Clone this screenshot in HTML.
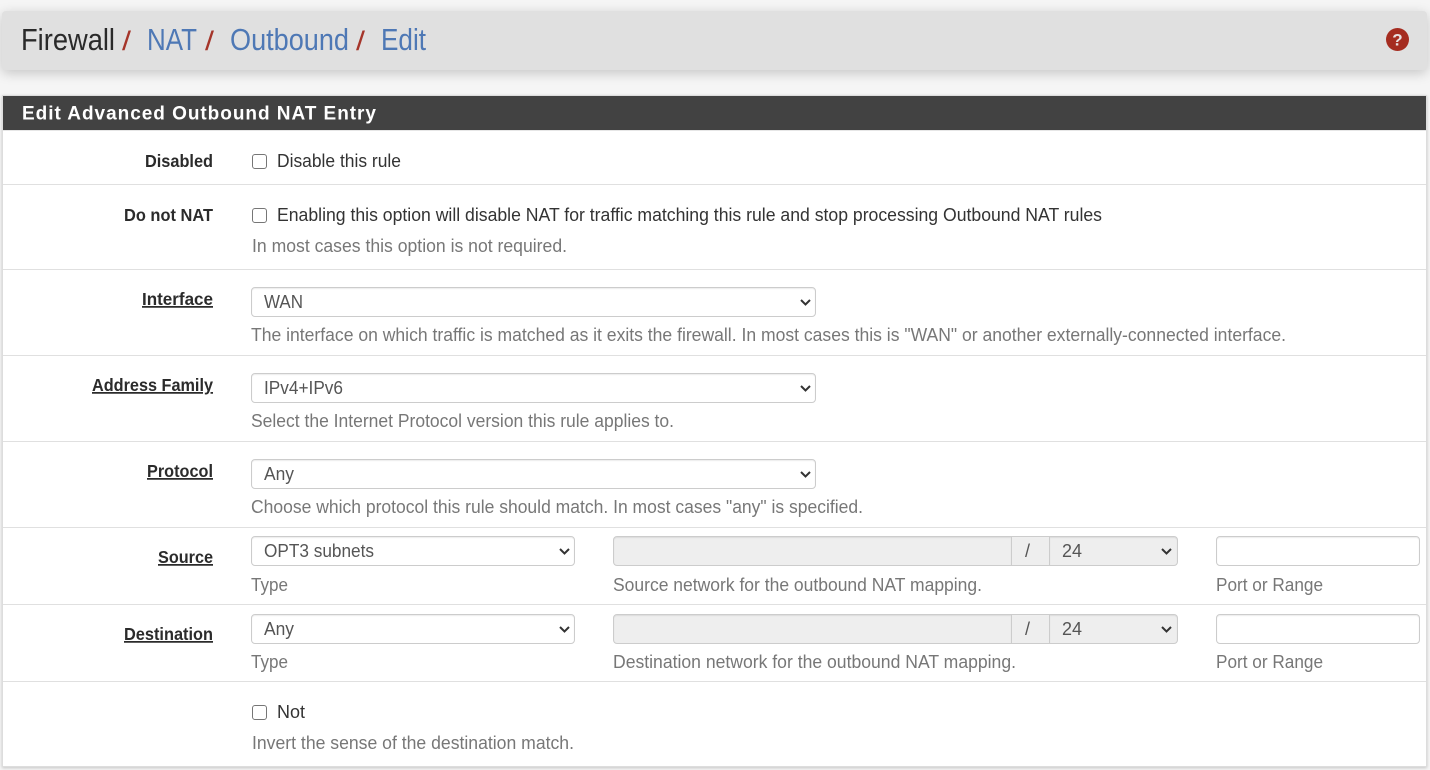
<!DOCTYPE html>
<html><head><meta charset="utf-8"><title>Firewall / NAT / Outbound / Edit</title>
<style>
html,body{margin:0;padding:0;width:1430px;height:770px;overflow:hidden;background:#f5f5f5;font-family:"Liberation Sans",sans-serif}
.a{position:absolute;box-sizing:border-box}
.hdr{left:2px;top:11px;width:1425px;height:59px;background:#e0e0e0;border-radius:4px;box-shadow:0 3px 12px rgba(0,0,0,.2)}
.panel{left:2px;top:95px;width:1425px;height:672px;background:#fff;border:1px solid #ddd;box-shadow:0 1px 3px rgba(0,0,0,.2)}
.ph{left:3px;top:96px;width:1423px;height:34px;background:#424242}
.l{left:3px;width:1423px;height:1px;background:#e0e0e0}
.f{height:30px;background:#fff;border:1px solid #ccc;border-radius:4px;box-shadow:inset 0 1px 1px rgba(0,0,0,.075)}
.d{background:#eee;box-shadow:inset 0 1px 1px rgba(0,0,0,.075)}
.c{width:15px;height:15px;border:1px solid #767676;border-radius:3px;background:#fff}
svg.o{position:absolute;left:0;top:0}
text{font-family:"Liberation Sans",sans-serif;font-size:18px}
.h{font-size:31px}
.s{font-size:27px}
.k{fill:#2a2a2a}.b{fill:#4e78b5}.r{fill:#a5352a}
.lab{font-weight:700;fill:#2b2b2b;font-size:17.5px}
.t{fill:#333}.g{fill:#777}.v{fill:#555}
.ch{fill:none;stroke:#333;stroke-width:2}
</style></head><body>
<div class="a hdr"></div>
<div class="a panel"></div>
<div class="a ph"></div>
<div class="a l" style="top:130px;background:#e6e6e6"></div>
<div class="a l" style="top:184px"></div>
<div class="a l" style="top:269px"></div>
<div class="a l" style="top:355px"></div>
<div class="a l" style="top:441px"></div>
<div class="a l" style="top:527px"></div>
<div class="a l" style="top:604px"></div>
<div class="a l" style="top:681px"></div>

<div class="a c" style="left:252px;top:154px"></div>
<div class="a c" style="left:252px;top:208px"></div>
<div class="a c" style="left:252px;top:705px"></div>

<div class="a f" style="left:251px;top:287px;width:565px"></div>
<div class="a f" style="left:251px;top:373px;width:565px"></div>
<div class="a f" style="left:251px;top:459px;width:565px"></div>
<div class="a f" style="left:251px;top:536px;width:324px"></div>
<div class="a f" style="left:251px;top:614px;width:324px"></div>

<div class="a f d" style="left:613px;top:536px;width:399px;border-radius:4px 0 0 4px"></div>
<div class="a f d" style="left:1011px;top:536px;width:39px;border-radius:0;box-shadow:none"></div>
<div class="a f d" style="left:1049px;top:536px;width:129px;border-radius:0 4px 4px 0"></div>
<div class="a f d" style="left:613px;top:614px;width:399px;border-radius:4px 0 0 4px"></div>
<div class="a f d" style="left:1011px;top:614px;width:39px;border-radius:0;box-shadow:none"></div>
<div class="a f d" style="left:1049px;top:614px;width:129px;border-radius:0 4px 4px 0"></div>
<div class="a f" style="left:1216px;top:536px;width:204px"></div>
<div class="a f" style="left:1216px;top:614px;width:204px"></div>

<svg class="o" width="1430" height="770" viewBox="0 0 1430 770">
<text class="h k" x="21" y="50" textLength="94" lengthAdjust="spacingAndGlyphs">Firewall</text>
<text class="s r" x="122" y="50" textLength="9" lengthAdjust="spacingAndGlyphs">/</text>
<text class="h b" x="147" y="50" textLength="50" lengthAdjust="spacingAndGlyphs">NAT</text>
<text class="s r" x="205" y="50" textLength="9" lengthAdjust="spacingAndGlyphs">/</text>
<text class="h b" x="230" y="50" textLength="119" lengthAdjust="spacingAndGlyphs">Outbound</text>
<text class="s r" x="356" y="50" textLength="9" lengthAdjust="spacingAndGlyphs">/</text>
<text class="h b" x="381" y="50" textLength="45" lengthAdjust="spacingAndGlyphs">Edit</text>

<circle cx="1397.500" cy="39.500" r="11.500" fill="#a52c20"/>
<text x="1397.500" y="45.500" text-anchor="middle" style="font-size:17px;font-weight:700;fill:#e8e0e0">?</text>

<text x="22" y="119.500" textLength="354" lengthAdjust="spacing" style="font-size:19px;font-weight:700;fill:#fff">Edit Advanced Outbound NAT Entry</text>

<text class="lab" x="145" y="167" textLength="68" lengthAdjust="spacingAndGlyphs">Disabled</text>
<text class="lab" x="124" y="221" textLength="89" lengthAdjust="spacingAndGlyphs">Do not NAT</text>
<text class="lab" x="142" y="305" textLength="71" lengthAdjust="spacingAndGlyphs" text-decoration="underline">Interface</text>
<text class="lab" x="92" y="391" textLength="121" lengthAdjust="spacingAndGlyphs" text-decoration="underline">Address Family</text>
<text class="lab" x="147" y="477" textLength="66" lengthAdjust="spacingAndGlyphs" text-decoration="underline">Protocol</text>
<text class="lab" x="158" y="563" textLength="55" lengthAdjust="spacingAndGlyphs" text-decoration="underline">Source</text>
<text class="lab" x="124" y="640" textLength="89" lengthAdjust="spacingAndGlyphs" text-decoration="underline">Destination</text>

<text class="t" x="277" y="167" textLength="124" lengthAdjust="spacingAndGlyphs">Disable this rule</text>
<text class="t" x="277" y="221" textLength="825" lengthAdjust="spacingAndGlyphs">Enabling this option will disable NAT for traffic matching this rule and stop processing Outbound NAT rules</text>
<text class="g" x="252" y="252" textLength="315" lengthAdjust="spacingAndGlyphs">In most cases this option is not required.</text>
<text class="v" x="264" y="308" textLength="39" lengthAdjust="spacingAndGlyphs">WAN</text>
<text class="g" x="251" y="341" textLength="1035" lengthAdjust="spacingAndGlyphs">The interface on which traffic is matched as it exits the firewall. In most cases this is "WAN" or another externally-connected interface.</text>
<text class="v" x="264" y="394" textLength="79" lengthAdjust="spacingAndGlyphs">IPv4+IPv6</text>
<text class="g" x="251" y="427" textLength="423" lengthAdjust="spacingAndGlyphs">Select the Internet Protocol version this rule applies to.</text>
<text class="v" x="264" y="480" textLength="30" lengthAdjust="spacingAndGlyphs">Any</text>
<text class="g" x="251" y="513" textLength="612" lengthAdjust="spacingAndGlyphs">Choose which protocol this rule should match. In most cases "any" is specified.</text>

<text class="v" x="264" y="557" textLength="110" lengthAdjust="spacingAndGlyphs">OPT3 subnets</text>
<text class="g" x="251" y="591" textLength="37" lengthAdjust="spacingAndGlyphs">Type</text>
<text class="v" x="1025" y="557">/</text>
<text class="v" x="1062" y="557" textLength="20" lengthAdjust="spacingAndGlyphs">24</text>
<text class="g" x="613" y="591" textLength="369" lengthAdjust="spacingAndGlyphs">Source network for the outbound NAT mapping.</text>
<text class="g" x="1216" y="591" textLength="107" lengthAdjust="spacingAndGlyphs">Port or Range</text>

<text class="v" x="264" y="635" textLength="30" lengthAdjust="spacingAndGlyphs">Any</text>
<text class="g" x="251" y="668" textLength="37" lengthAdjust="spacingAndGlyphs">Type</text>
<text class="v" x="1025" y="635">/</text>
<text class="v" x="1062" y="635" textLength="20" lengthAdjust="spacingAndGlyphs">24</text>
<text class="g" x="613" y="668" textLength="403" lengthAdjust="spacingAndGlyphs">Destination network for the outbound NAT mapping.</text>
<text class="g" x="1216" y="668" textLength="107" lengthAdjust="spacingAndGlyphs">Port or Range</text>

<text class="t" x="277" y="718" textLength="28" lengthAdjust="spacingAndGlyphs">Not</text>
<text class="g" x="252" y="749" textLength="322" lengthAdjust="spacingAndGlyphs">Invert the sense of the destination match.</text>

<path class="ch" d="M801 300l4.500 4.500 4.500-4.500"/>
<path class="ch" d="M801 386l4.500 4.500 4.500-4.500"/>
<path class="ch" d="M801 472l4.500 4.500 4.500-4.500"/>
<path class="ch" d="M560 549l4.500 4.500 4.500-4.500"/>
<path class="ch" d="M560 627l4.500 4.500 4.500-4.500"/>
<path class="ch" d="M1162 549l4.500 4.500 4.500-4.500"/>
<path class="ch" d="M1162 627l4.500 4.500 4.500-4.500"/>
</svg>
</body></html>
